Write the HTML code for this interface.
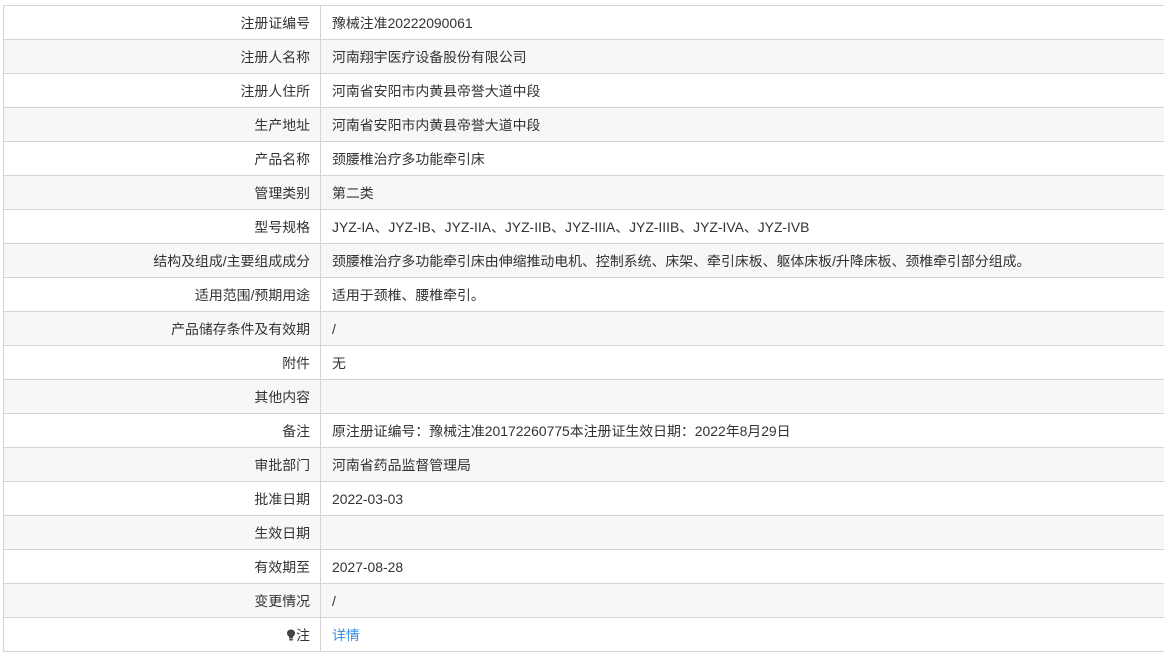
<!DOCTYPE html>
<html><head><meta charset="utf-8"><style>
body{margin:0;background:#fff;width:1164px;height:666px;overflow:hidden;font-family:"Liberation Sans","Noto Sans CJK SC",sans-serif;font-size:13.9px;color:#333}
table{position:absolute;left:3px;top:5px;width:1170px;border-collapse:collapse}
td{border:1px solid #d4d4d4;height:34px;padding:0;box-sizing:border-box}
tr:nth-child(even) td{background:#f7f7f7}
td.l{width:317px;text-align:right;padding-right:10px}
td.v{padding-left:11px}
a{color:#3b8fe0;text-decoration:none}
</style></head><body>
<table>
<tr><td class="l">注册证编号</td><td class="v">豫械注准20222090061</td></tr>
<tr><td class="l">注册人名称</td><td class="v">河南翔宇医疗设备股份有限公司</td></tr>
<tr><td class="l">注册人住所</td><td class="v">河南省安阳市内黄县帝誉大道中段</td></tr>
<tr><td class="l">生产地址</td><td class="v">河南省安阳市内黄县帝誉大道中段</td></tr>
<tr><td class="l">产品名称</td><td class="v">颈腰椎治疗多功能牵引床</td></tr>
<tr><td class="l">管理类别</td><td class="v">第二类</td></tr>
<tr><td class="l">型号规格</td><td class="v">JYZ-IA、JYZ-IB、JYZ-IIA、JYZ-IIB、JYZ-IIIA、JYZ-IIIB、JYZ-IVA、JYZ-IVB</td></tr>
<tr><td class="l">结构及组成/主要组成成分</td><td class="v">颈腰椎治疗多功能牵引床由伸缩推动电机、控制系统、床架、牵引床板、躯体床板/升降床板、颈椎牵引部分组成。</td></tr>
<tr><td class="l">适用范围/预期用途</td><td class="v">适用于颈椎、腰椎牵引。</td></tr>
<tr><td class="l">产品储存条件及有效期</td><td class="v">/</td></tr>
<tr><td class="l">附件</td><td class="v">无</td></tr>
<tr><td class="l">其他内容</td><td class="v"></td></tr>
<tr><td class="l">备注</td><td class="v">原注册证编号：豫械注准20172260775本注册证生效日期：2022年8月29日</td></tr>
<tr><td class="l">审批部门</td><td class="v">河南省药品监督管理局</td></tr>
<tr><td class="l">批准日期</td><td class="v">2022-03-03</td></tr>
<tr><td class="l">生效日期</td><td class="v"></td></tr>
<tr><td class="l">有效期至</td><td class="v">2027-08-28</td></tr>
<tr><td class="l">变更情况</td><td class="v">/</td></tr>
<tr><td class="l"><svg width="10" height="12" viewBox="0 0 10 12" style="vertical-align:-1px"><path d="M5 0.5C2.5 0.5 1 2.3 1 4.3c0 1.6 1 2.6 2 3.4V9.5h4V7.7c1-.8 2-1.8 2-3.4C9 2.3 7.5.5 5 .5z" fill="#444"/><rect x="3.3" y="10" width="3.4" height="1.5" fill="#444"/></svg>注</td><td class="v"><a>详情</a></td></tr>
</table>
</body></html>
